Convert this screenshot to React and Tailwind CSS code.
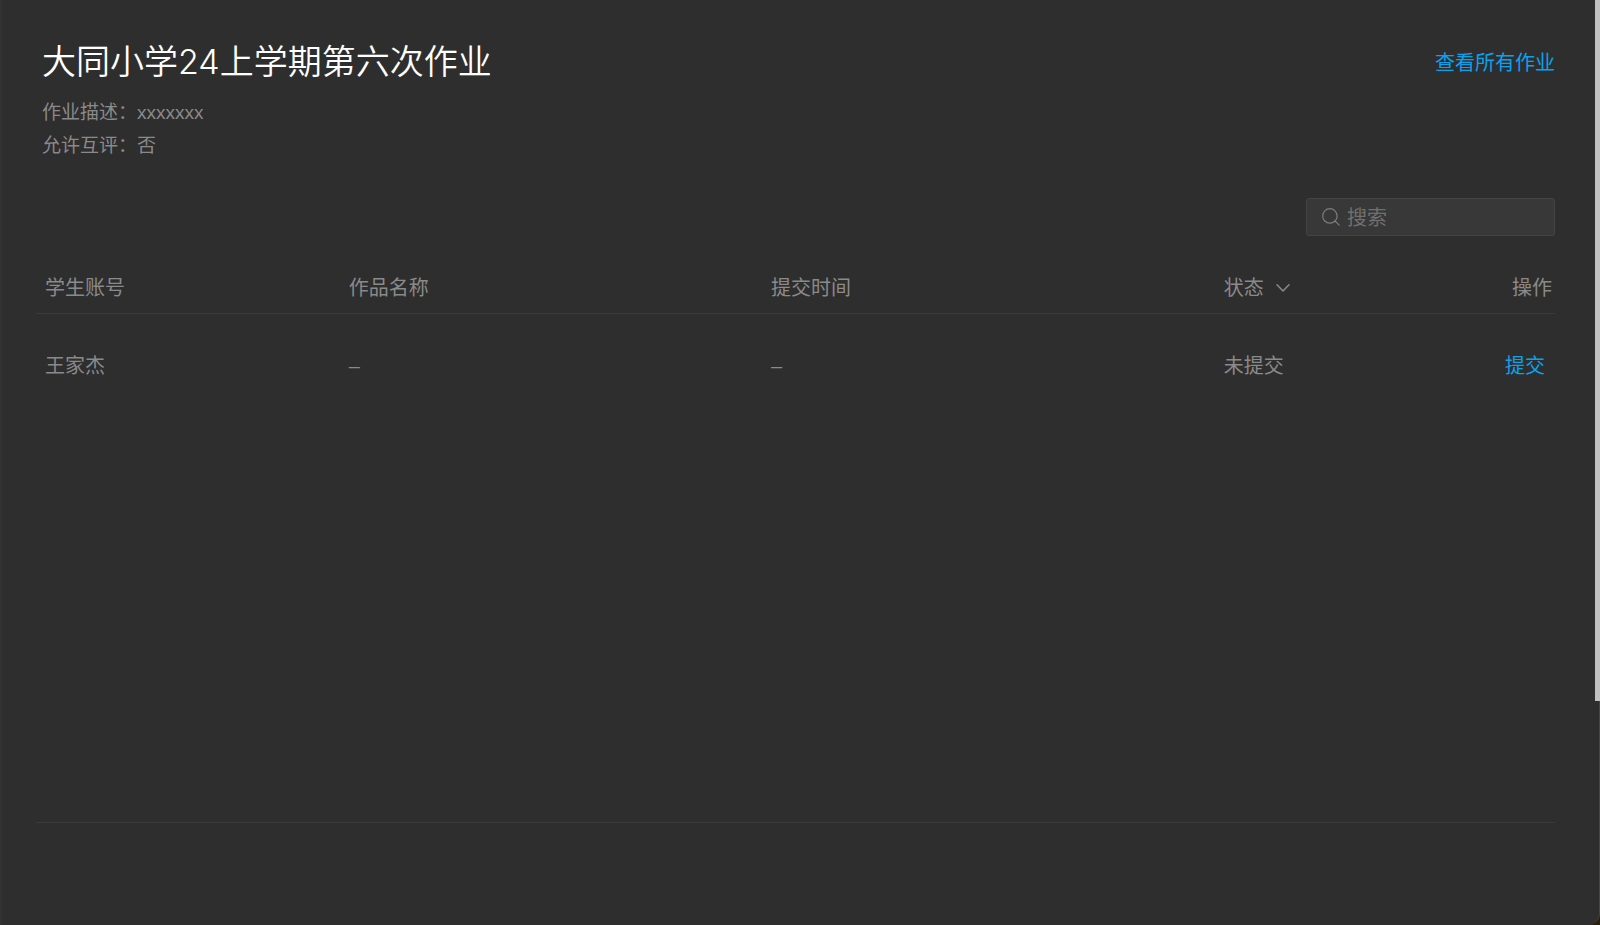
import { useState } from "react";

const students = [{ account: "王家杰", work: "–", time: "–", status: "未提交" }];

const SearchIcon = () => (
  <svg
    className="absolute left-4 h-[18px] w-[18px] text-[#7c7c7c]"
    viewBox="0 0 18 18"
    fill="none"
    stroke="currentColor"
    strokeWidth="1.2"
    strokeLinecap="round"
    aria-hidden="true"
  >
    <circle cx="7.9" cy="7.9" r="7.2" />
    <path d="M13 13 17.2 17.2" />
  </svg>
);

const ChevronIcon = () => (
  <svg
    className="h-2 w-[14px]"
    viewBox="0 0 14 8"
    fill="none"
    stroke="currentColor"
    strokeWidth="1.5"
    strokeLinecap="round"
    strokeLinejoin="round"
    aria-hidden="true"
  >
    <path d="M1 0.8 7 7 13 0.8" />
  </svg>
);

const App = () => {
  const [keyword, setKeyword] = useState("");
  const [descending, setDescending] = useState(false);

  const rows = students.filter((s) => s.account.includes(keyword));
  if (descending) rows.reverse();

  return (
    <div className="min-h-screen bg-[#2b1f0c]">
      <main className="relative flex min-h-screen flex-col rounded-br-xl border-r border-l-2 border-r-[#454545] border-l-[#333333] bg-[#2e2e2e] pr-11 pl-[34px] font-['Liberation_Sans','Noto_Sans_CJK_SC',sans-serif] text-xl leading-7 text-[#8a8a8a]">
        <header className="flex items-start justify-between pt-[37px] pl-1.5">
          <div>
            <h1 className="font-['Inter','Noto_Sans_CJK_SC',sans-serif] text-[34px] leading-[50px] font-[350] text-white">
              大同小学24上学期第六次作业
            </h1>
            <p className="mt-2 text-[19px] leading-9">作业描述：xxxxxxx</p>
            <p className="text-[19px] leading-[30px]">允许互评：否</p>
          </div>
          <a href="#all" className="mt-3 text-[#0aa2ee]">
            查看所有作业
          </a>
        </header>

        <div className="relative mt-[37px] flex w-[249px] items-center self-end">
          <SearchIcon />
          <input
            type="text"
            aria-label="搜索"
            value={keyword}
            onChange={(e) => setKeyword(e.target.value)}
            placeholder="搜索"
            className="h-[38px] w-full rounded-[3px] border border-[#444444] bg-[#383838] pt-0.5 pr-3 pl-10 outline-none placeholder:text-[#707070]"
          />
        </div>

        <section className="mt-[27px] flex-1 border-b border-[#3a3a3a]">
          <table className="w-full table-fixed text-left">
            <thead>
              <tr className="border-b border-[#3a3a3a]">
                <th className="w-[20%] py-[11px] pl-[9px] font-normal">学生账号</th>
                <th className="w-[27.8%] pl-[9px] font-normal">作品名称</th>
                <th className="w-[29.8%] pl-[9px] font-normal">提交时间</th>
                <th className="pl-[9px] font-normal">
                  <button
                    type="button"
                    onClick={() => setDescending(!descending)}
                    className="flex items-center gap-3"
                  >
                    状态
                    <ChevronIcon />
                  </button>
                </th>
                <th className="pr-[3px] text-right font-normal">操作</th>
              </tr>
            </thead>
            <tbody>
              {rows.map((s) => (
                <tr key={s.account}>
                  <td className="py-[38px] pl-[9px]">{s.account}</td>
                  <td className="pl-[9px]">{s.work}</td>
                  <td className="pl-[9px]">{s.time}</td>
                  <td className="pl-[9px]">{s.status}</td>
                  <td className="pr-2.5 text-right">
                    <button type="button" className="text-[#0aa2ee]">
                      提交
                    </button>
                  </td>
                </tr>
              ))}
            </tbody>
          </table>
        </section>
        <footer className="h-[102px]" />

        <div className="absolute top-0 -right-px h-[701px] w-[5px] bg-[#c1c1c1]" />
      </main>
    </div>
  );
};

export default App;
